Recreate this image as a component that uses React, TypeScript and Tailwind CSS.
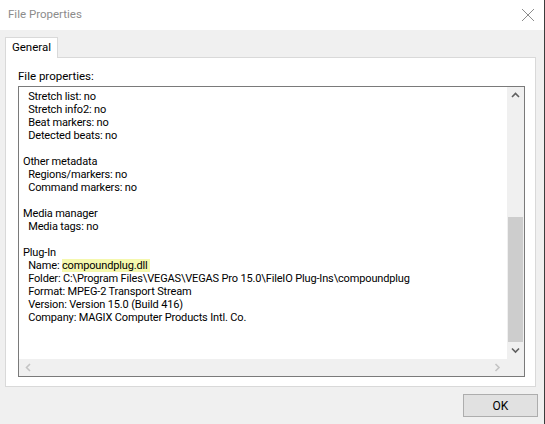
import React from 'react';

const font = { fontFamily: 'Roboto, "Liberation Sans", Arial, sans-serif' };

type Line = { text: string; indent?: boolean; hl?: string; pre?: string };

const lines: Line[] = [
    { text: 'Stretch list: no', indent: true },
    { text: 'Stretch info2: no', indent: true },
    { text: 'Beat markers: no', indent: true },
    { text: 'Detected beats: no', indent: true },
    { text: '' },
    { text: 'Other metadata' },
    { text: 'Regions/markers: no', indent: true },
    { text: 'Command markers: no', indent: true },
    { text: '' },
    { text: 'Media manager' },
    { text: 'Media tags: no', indent: true },
    { text: '' },
    { text: 'Plug-In' },
    { text: '', pre: 'Name: ', hl: 'compoundplug.dll ', indent: true },
    { text: 'Folder: C:\\Program Files\\VEGAS\\VEGAS Pro 15.0\\FileIO Plug-Ins\\compoundplug', indent: true },
    { text: 'Format: MPEG-2 Transport Stream', indent: true },
    { text: 'Version: Version 15.0 (Build 416)', indent: true },
    { text: 'Company: MAGIX Computer Products Intl. Co.', indent: true },
];

const Chevron: React.FC<{ dir: 'up' | 'down' | 'left' | 'right'; color: string }> = ({ dir, color }) => {
    const pts = {
        up: '1,6 4.5,2.5 8,6',
        down: '1,2.5 4.5,6 8,2.5',
        left: '6,1 2.5,4.5 6,8',
        right: '2.5,1 6,4.5 2.5,8',
    }[dir];
    return (
        <svg width="9" height="9" viewBox="0 0 9 9">
            <polyline points={pts} fill="none" stroke={color} strokeWidth="1.6" />
        </svg>
    );
};

export default function App() {
    return (
        <div className="w-[545px] h-[424px] bg-[#f0f0f0] flex flex-col border-r border-[#3c3c3c] text-[11.5px] text-black" style={font}>
            {/* title bar */}
            <div className="h-[30px] bg-white flex items-center justify-between pl-[8px] pr-[9px] shrink-0">
                <span className="text-[#8c8c8c] text-[11.5px]">File Properties</span>
                <svg width="14" height="14" viewBox="0 0 14 14">
                    <path d="M1 1 L13 13 M13 1 L1 13" stroke="#8c8c8c" strokeWidth="1" />
                </svg>
            </div>

            <div className="flex flex-col pl-[5px] pr-[8px] pt-[7px]">
                {/* tab strip */}
                <div className="flex">
                    <div className="w-[53px] h-[21px] bg-white border border-b-0 border-[#d9d9d9] flex items-center justify-center -mb-px relative z-10">
                        General
                    </div>
                </div>
                {/* tab panel */}
                <div className="border border-[#d9d9d9] bg-white h-[330px] pt-[10px] pl-[12px] pr-[10px] flex flex-col">
                    <div className="h-[17px] leading-[17px] mb-[1px]">File properties:</div>
                    <div className="border border-[#7a7a7a] flex flex-col h-[291px]">
                        <div className="flex h-[272px]">
                            <div className="flex-1 overflow-hidden pt-[3px] pl-[4px] leading-[13px] whitespace-pre text-[11px] tracking-[-0.15px]">
                                {lines.map((l, i) => (
                                    <div key={i} className="h-[13px]">
                                        {l.indent ? '  ' : ''}
                                        {l.pre}
                                        {l.hl ? <span className="bg-[#f5f8ae]">{l.hl}</span> : null}
                                        {l.text}
                                    </div>
                                ))}
                            </div>
                            {/* vertical scrollbar */}
                            <div className="w-[17px] bg-[#f0f0f0] flex flex-col">
                                <div className="h-[17px] flex items-center justify-center">
                                    <Chevron dir="up" color="#606060" />
                                </div>
                                <div className="flex-1 flex flex-col">
                                    <div className="h-[113px]" />
                                    <div className="mx-[1px] flex-1 bg-[#cdcdcd]" />
                                </div>
                                <div className="h-[17px] flex items-center justify-center">
                                    <Chevron dir="down" color="#606060" />
                                </div>
                            </div>
                        </div>
                        {/* horizontal scrollbar */}
                        <div className="h-[17px] flex bg-[#f0f0f0]">
                            <div className="flex-1 flex items-center justify-between px-[5px]">
                                <Chevron dir="left" color="#c4c4c4" />
                                <Chevron dir="right" color="#c4c4c4" />
                            </div>
                            <div className="w-[17px] bg-[#f0f0f0]" />
                        </div>
                    </div>
                </div>
                {/* footer */}
                <div className="flex justify-end pt-[7px]">
                    <button className="w-[75px] h-[23px] bg-[#e1e1e1] border border-[#adadad] text-[12px] mr-[-2px]">OK</button>
                </div>
            </div>
        </div>
    );
}
